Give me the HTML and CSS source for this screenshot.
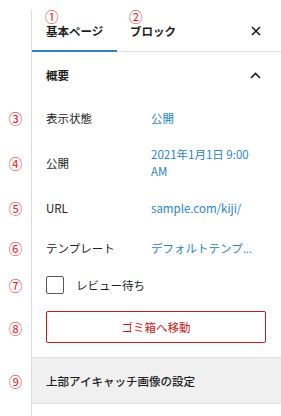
FILE: index.html
```html
<!DOCTYPE html>
<html lang="ja">
<head>
<meta charset="utf-8">
<link rel="stylesheet" href="styles.css">
</head>
<body>
<div class="panel">
  <div class="row tabs-row">
    <div class="gutter"></div>
    <div class="cell tabs">
      <div class="tab active"><span class="note">①</span><span class="tab-label">基本ページ</span></div>
      <div class="tab"><span class="note">②</span><span class="tab-label">ブロック</span></div>
      <div class="close">
        <svg width="10" height="10" viewBox="0 0 10 10"><path d="M1 1 L9 9 M9 1 L1 9" stroke="#1e1e1e" stroke-width="1.6" fill="none"/></svg>
      </div>
    </div>
  </div>

  <div class="row">
    <div class="gutter"></div>
    <div class="cell section-head">
      <span class="head-title">概要</span>
      <svg class="chevron" width="11" height="7" viewBox="0 0 11 7"><path d="M1 6 L5.5 1.5 L10 6" stroke="#1e1e1e" stroke-width="1.6" fill="none"/></svg>
    </div>
  </div>

  <div class="row field h40">
    <div class="gutter note">③</div>
    <div class="cell field-cell"><span class="label">表示状態</span><span class="value">公開</span></div>
  </div>

  <div class="row field h50">
    <div class="gutter note">④</div>
    <div class="cell field-cell"><span class="label">公開</span><span class="value">2021年1月1日 9:00<br>AM</span></div>
  </div>

  <div class="row field h40">
    <div class="gutter note">⑤</div>
    <div class="cell field-cell"><span class="label">URL</span><span class="value">sample.com/kiji/</span></div>
  </div>

  <div class="row field h40">
    <div class="gutter note">⑥</div>
    <div class="cell field-cell"><span class="label">テンプレート</span><span class="value">デフォルトテンプ...</span></div>
  </div>

  <div class="row field h34">
    <div class="gutter note">⑦</div>
    <div class="cell field-cell"><span class="checkbox"></span><span class="check-label">レビュー待ち</span></div>
  </div>

  <div class="row">
    <div class="gutter note note-btn">⑧</div>
    <div class="cell btn-cell"><div class="trash">ゴミ箱へ移動</div></div>
  </div>

  <div class="row">
    <div class="gutter note">⑨</div>
    <div class="cell gray-section">上部アイキャッチ画像の設定</div>
  </div>

  <div class="row rest">
    <div class="gutter"></div>
    <div class="cell"></div>
  </div>
</div>
</body>
</html>
```

FILE: styles.css
```css
* { box-sizing: border-box; }
html, body {
  margin: 0;
  padding: 0;
  background: #fff;
}
body {
  font-family: "Noto Sans CJK JP", "Noto Sans", sans-serif;
  font-size: 11.5px;
  color: #1e1e1e;
  width: 281px;
  height: 416px;
  overflow: hidden;
}
.panel {
  display: flex;
  flex-direction: column;
  padding-top: 10px;
}
.row {
  display: flex;
}
.gutter {
  width: 31px;
  flex: none;
}
.note {
  color: #f01414;
  font-size: 13.5px;
  display: flex;
  align-items: center;
  justify-content: center;
  line-height: 14px;
}
.cell {
  flex: 1;
  border-left: 1px solid #dcdcdc;
  min-width: 0;
}

/* tabs */
.tabs {
  display: flex;
  border-bottom: 1px solid #e0e0e0;
  height: 42px;
}
.tab {
  display: flex;
  flex-direction: column;
  align-items: flex-start;
  padding: 0 0 0 13px;
  width: 85px;
  margin-bottom: -1px;
}
.tab .note {
  height: 13px;
  display: block;
  line-height: 13px;
  margin-left: -1px;
}
.tab.active {
  padding-left: 14px;
  box-shadow: inset 0 -2px 0 #2a84c6;
}
.tab-label {
  font-weight: 600;
  line-height: 15px;
  margin-top: 1px;
}
.close {
  margin-left: auto;
  margin-right: 13px;
  margin-top: 16px;
  width: 24px;
  height: 12px;
  display: flex;
  justify-content: center;
  align-items: flex-start;
}

/* section head */
.section-head {
  height: 46px;
  display: flex;
  align-items: center;
  justify-content: space-between;
  padding: 0 20px 0 14px;
}
.head-title {
  font-weight: 600;
}

/* fields */
.field-cell {
  display: flex;
  align-items: center;
  padding-left: 14px;
}
.h40 { height: 40px; }
.h50 { height: 50px; }
.h34 { height: 34px; }
.label {
  width: 105px;
  flex: none;
}
.value {
  color: #2a84c6;
  line-height: 17px;
}
.checkbox {
  width: 18px;
  height: 18px;
  border: 1.5px solid #5a5a5a;
  border-radius: 2px;
  flex: none;
}
.check-label {
  margin-left: 12px;
}

/* button */
.note-btn {
  padding-bottom: 3px;
}
.btn-cell {
  padding: 9px 15px 14px 14px;
}
.trash {
  height: 32px;
  border: 1px solid #cc1818;
  border-radius: 2px;
  color: #cc1818;
  display: flex;
  align-items: center;
  justify-content: center;
}

/* gray section */
.gray-section {
  height: 47px;
  background: #f0f0f0;
  border-top: 1px solid #e0e0e0;
  border-bottom: 1px solid #e0e0e0;
  display: flex;
  align-items: center;
  padding-left: 14px;
  font-weight: 500;
}
.rest {
  height: 20px;
}
```
